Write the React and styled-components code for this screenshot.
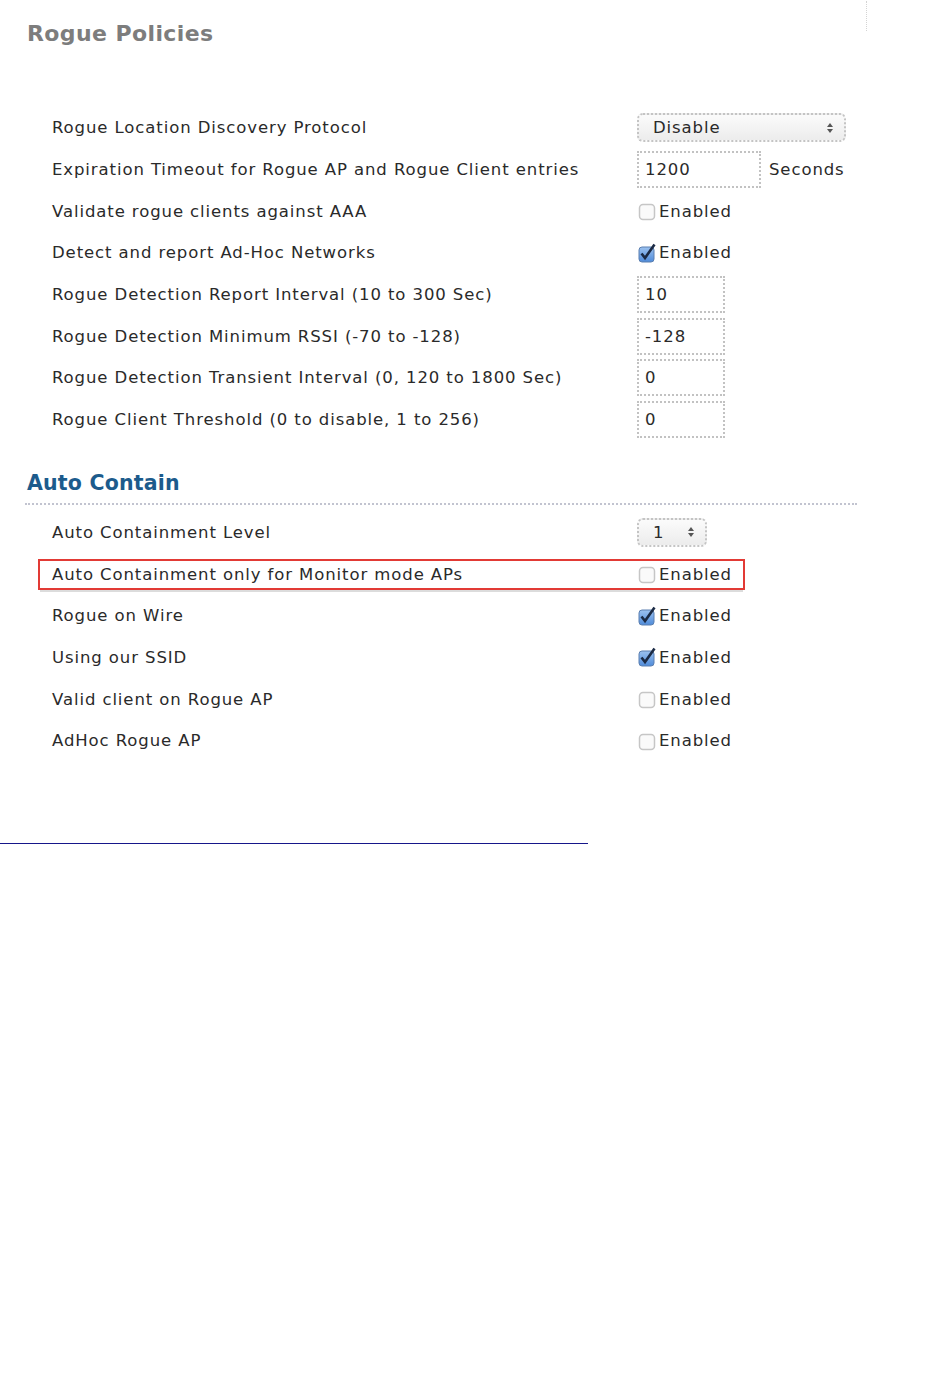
import React from "react";
import styled, { createGlobalStyle } from "styled-components";

const GlobalStyle = createGlobalStyle`
  html, body {
    margin: 0;
    padding: 0;
    background: #ffffff;
  }
  body {
    font-family: "DejaVu Sans", Verdana, sans-serif;
    color: #333;
  }
`;

const Page = styled.div`
  width: 950px;
  min-height: 1398px;
  padding-top: 21px;
  box-sizing: border-box;
`;

const TopBar = styled.div`
  display: flex;
  justify-content: space-between;
  width: 868px;
  padding-left: 27px;
  box-sizing: border-box;
`;

const Title = styled.h1`
  margin: 0;
  font-size: 22px;
  line-height: 26px;
  letter-spacing: 0.4px;
  font-weight: bold;
  color: #7d7d7d;
`;

const ScrollHint = styled.div`
  width: 1px;
  height: 30px;
  margin-top: -20px;
  border-left: 1px dotted #d4d4d4;
`;

const Rows = styled.div`
  display: flex;
  flex-direction: column;
  margin-top: ${(p) => p.$top || 0}px;
`;

const Row = styled.div`
  display: flex;
  align-items: center;
  height: 41.7px;
  padding-left: ${(p) => (p.$highlight ? 38 : 52)}px;
`;

const Highlight = styled.div`
  display: flex;
  align-items: center;
  width: 707px;
  height: 31px;
  box-sizing: border-box;
  padding-left: 12px;
  border: 2px solid #e23a35;
  box-shadow: 0 4px 0 -2px #dcdcdc;
`;

const text = `
  font-size: 16.5px;
  letter-spacing: 0.9px;
  color: #2a2a2a;
`;

const Label = styled.div`
  width: 585px;
  flex-shrink: 0;
  white-space: nowrap;
  ${text}
`;

const Control = styled.div`
  display: flex;
  align-items: center;
`;

const Select = styled.div`
  display: flex;
  align-items: center;
  justify-content: space-between;
  width: ${(p) => p.$width}px;
  height: 29px;
  box-sizing: border-box;
  padding: 0 10px 0 14px;
  border: 2px dotted #c4c4c4;
  border-radius: 6px;
  background: linear-gradient(#fbfbfb, #ececec);
  ${text}
`;

const Input = styled.div`
  display: flex;
  align-items: center;
  width: ${(p) => p.$width}px;
  height: 37px;
  box-sizing: border-box;
  padding-left: 6px;
  border: 2px dotted #c2c2c2;
  background: #fff;
  ${text}
`;

const Unit = styled.span`
  margin-left: 8px;
  ${text}
`;

const CheckLabel = styled.span`
  margin-left: 2px;
  ${text}
`;

const Section = styled.h2`
  margin: 30px 0 0 25px;
  width: 832px;
  padding: 0 0 7px 2px;
  box-sizing: border-box;
  font-size: 20.5px;
  line-height: 25px;
  letter-spacing: 0.2px;
  font-weight: bold;
  color: #1c5b8c;
  border-bottom: 2px dotted #c2c4d0;
`;

const FootRule = styled.hr`
  margin: 81px 0 0 0;
  width: 588px;
  border: none;
  border-top: 1px solid #16168a;
`;

function Arrows() {
  return (
    <svg width="8" height="12" viewBox="0 0 8 12">
      <path d="M4 1 L7 5 L1 5 Z" fill="#555" />
      <path d="M4 11 L7 7 L1 7 Z" fill="#555" />
    </svg>
  );
}

function Checkbox({ checked }) {
  if (checked) {
    return (
      <svg width="20" height="20" viewBox="0 0 20 20">
        <defs>
          <linearGradient id="cb" x1="0" y1="0" x2="0" y2="1">
            <stop offset="0" stopColor="#9cc2f0" />
            <stop offset="1" stopColor="#4f8bd9" />
          </linearGradient>
        </defs>
        <rect x="2" y="4" width="15" height="15" rx="3" fill="url(#cb)" stroke="#5b7fb0" />
        <path d="M4.5 10.5 L8 15 L17.5 1.5" fill="none" stroke="#1b2a44" strokeWidth="2.6" />
      </svg>
    );
  }
  return (
    <svg width="20" height="20" viewBox="0 0 20 20">
      <rect x="2.5" y="3.5" width="15" height="15" rx="3.5" fill="#fafafa" stroke="#c6c6c6" strokeWidth="1.5" />
    </svg>
  );
}

function Enabled({ checked }) {
  return (
    <Control>
      <Checkbox checked={checked} />
      <CheckLabel>Enabled</CheckLabel>
    </Control>
  );
}

const policies = [
  {
    label: "Rogue Location Discovery Protocol",
    control: (
      <Select $width={209}>
        <span>Disable</span>
        <Arrows />
      </Select>
    ),
  },
  {
    label: "Expiration Timeout for Rogue AP and Rogue Client entries",
    control: (
      <Control>
        <Input $width={124}>1200</Input>
        <Unit>Seconds</Unit>
      </Control>
    ),
  },
  { label: "Validate rogue clients against AAA", control: <Enabled /> },
  { label: "Detect and report Ad-Hoc Networks", control: <Enabled checked /> },
  { label: "Rogue Detection Report Interval (10 to 300 Sec)", control: <Input $width={88}>10</Input> },
  { label: "Rogue Detection Minimum RSSI (-70 to -128)", control: <Input $width={88}>-128</Input> },
  { label: "Rogue Detection Transient Interval (0, 120 to 1800 Sec)", control: <Input $width={88}>0</Input> },
  { label: "Rogue Client Threshold (0 to disable, 1 to 256)", control: <Input $width={88}>0</Input> },
];

const contain = [
  {
    label: "Auto Containment Level",
    control: (
      <Select $width={70}>
        <span>1</span>
        <Arrows />
      </Select>
    ),
  },
  { label: "Auto Containment only for Monitor mode APs", control: <Enabled />, highlight: true },
  { label: "Rogue on Wire", control: <Enabled checked /> },
  { label: "Using our SSID", control: <Enabled checked /> },
  { label: "Valid client on Rogue AP", control: <Enabled /> },
  { label: "AdHoc Rogue AP", control: <Enabled /> },
];

function SettingRow({ item }) {
  if (item.highlight) {
    return (
      <Row $highlight>
        <Highlight>
          <Label>{item.label}</Label>
          {item.control}
        </Highlight>
      </Row>
    );
  }
  return (
    <Row>
      <Label>{item.label}</Label>
      {item.control}
    </Row>
  );
}

export default function App() {
  return (
    <Page>
      <GlobalStyle />
      <TopBar>
        <Title>Rogue Policies</Title>
        <ScrollHint />
      </TopBar>
      <Rows $top={60}>
        {policies.map((item) => (
          <SettingRow key={item.label} item={item} />
        ))}
      </Rows>
      <Section>Auto Contain</Section>
      <Rows $top={7}>
        {contain.map((item) => (
          <SettingRow key={item.label} item={item} />
        ))}
      </Rows>
      <FootRule />
    </Page>
  );
}
